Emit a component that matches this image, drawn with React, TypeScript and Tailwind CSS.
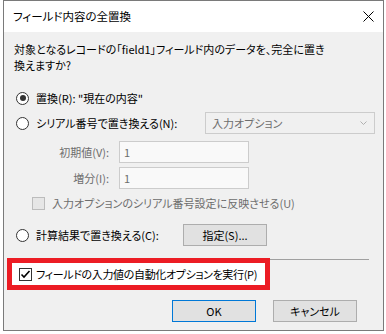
import React from "react";

const Radio = ({ checked }: { checked?: boolean }) => (
  <span className="flex h-[13px] w-[13px] shrink-0 items-center justify-center rounded-full border border-[#333333] bg-white">
    {checked && <span className="h-[6px] w-[6px] rounded-full bg-[#333333]" />}
  </span>
);

const Button = ({ label, primary }: { label: string; primary?: boolean }) => (
  <div
    className={`flex h-[22px] w-[84px] items-center justify-center bg-[#e1e1e1] ${
      primary ? "border border-[#0078d7]" : "border border-[#adadad]"
    }`}
  >
    {label}
  </div>
);

const App = () => {
  return (
    <div className="h-[334px] w-[386px] bg-white pl-[3px] font-['Noto_Sans_CJK_JP',sans-serif] text-[11px] text-black [font-feature-settings:'palt']">
      <div className="flex h-[331px] w-[381px] flex-col border border-[#7a7a7a]">
        {/* title bar */}
        <div className="flex h-[31px] items-center justify-between bg-white pl-[9px] pr-[9px]">
          <span className="text-[11.5px]">フィールド内容の全置換</span>
          <svg width="11" height="11" viewBox="0 0 11 11">
            <path d="M0.5 0.5 L10.5 10.5 M10.5 0.5 L0.5 10.5" stroke="#000" strokeWidth="1" />
          </svg>
        </div>

        {/* body */}
        <div className="flex flex-1 flex-col bg-[#f0f0f0]">
          <p className="whitespace-nowrap pl-[10px] pt-[9px] leading-[16px]">
            対象となるレコードの「field1」フィールド内のデータを、完全に置き
            <br />
            換えますか?
          </p>

          <div className="mt-[17px] flex h-[16px] items-center gap-[7px] pl-[12px]">
            <Radio checked />
            <span>置換(R): "現在の内容"</span>
          </div>

          <div className="mt-[6px] flex h-[22px] items-center pl-[12px]">
            <div className="flex items-center gap-[7px]">
              <Radio />
              <span>シリアル番号で置き換える(N):</span>
            </div>
            <div className="ml-auto mr-[8px] flex h-[22px] w-[170px] items-center justify-between border border-[#cccccc] bg-[#f0f0f0] pl-[6px] pr-[7px] text-[#6d6d6d]">
              <span>入力オプション</span>
              <svg width="7" height="4" viewBox="0 0 7 4">
                <path d="M0.5 0.5 L3.5 3.5 L6.5 0.5" stroke="#b0b0b0" fill="none" strokeWidth="1" />
              </svg>
            </div>
          </div>

          <div className="mt-[7px] flex h-[22px] items-center text-[#6d6d6d]">
            <span className="w-[106px] pr-[1px] text-right">初期値(V):</span>
            <div className="ml-[9px] flex h-[22px] w-[130px] items-center border border-[#cccccc] bg-[#f9f9f9] pl-[4px]">
              1
            </div>
          </div>

          <div className="mt-[4px] flex h-[22px] items-center text-[#6d6d6d]">
            <span className="w-[106px] pr-[1px] text-right">増分(I):</span>
            <div className="ml-[9px] flex h-[22px] w-[130px] items-center border border-[#cccccc] bg-[#f9f9f9] pl-[4px]">
              1
            </div>
          </div>

          <div className="mt-[6px] flex h-[16px] items-center gap-[7px] pl-[28px] text-[#6d6d6d]">
            <span className="h-[13px] w-[13px] shrink-0 border border-[#bcbcbc] bg-[#e6e6e6]" />
            <span>入力オプションのシリアル番号設定に反映させる(U)</span>
          </div>

          <div className="mt-[13px] flex h-[22px] items-center pl-[12px]">
            <div className="flex w-[167px] items-center gap-[7px]">
              <Radio />
              <span>計算結果で置き換える(C):</span>
            </div>
            <Button label="指定(S)..." />
          </div>

          <div className="mt-[12px] flex pl-[3px]">
            <div className="flex h-[32px] w-[263px] items-center gap-[4px] border-[5px] border-[#ec1c24] bg-white pl-[7px] pt-[1px]">
              <span className="flex h-[13px] w-[13px] shrink-0 items-center justify-center border border-[#333333] bg-white">
                <svg width="11" height="11" viewBox="0 0 11 11">
                  <path d="M1.5 5.5 L4 8 L9.5 2" stroke="#000" strokeWidth="1.6" fill="none" />
                </svg>
              </span>
              <span className="whitespace-nowrap tracking-[-0.35px]">フィールドの入力値の自動化オプションを実行(P)</span>
            </div>
            <div className="mr-[14px] mt-[1px] h-0 flex-1 border-t border-[#a0a0a0]" />
          </div>

          <div className="mt-[10px] flex justify-end gap-[17px] pr-[26px]">
            <Button label="OK" primary />
            <Button label="キャンセル" />
          </div>
        </div>
      </div>
    </div>
  );
};

export default App;
